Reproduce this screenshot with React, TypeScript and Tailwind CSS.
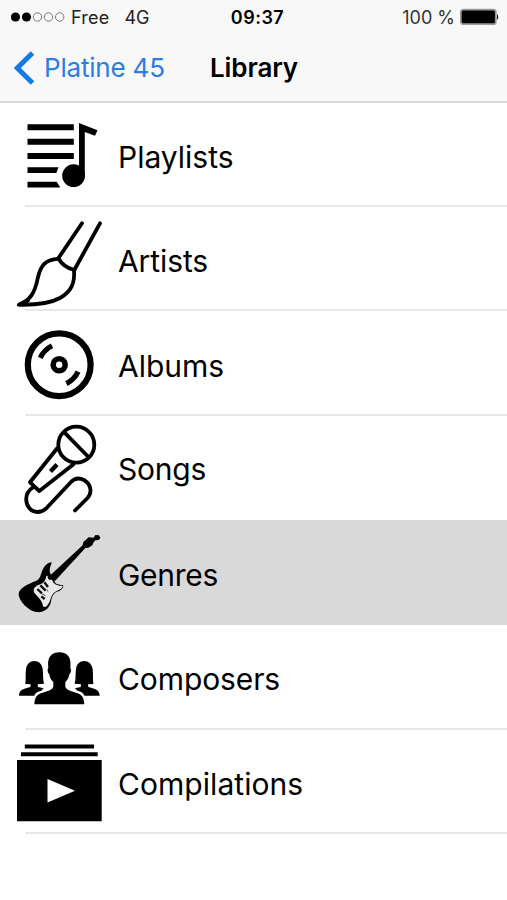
import React from "react";

const PlaylistIcon = () => (
  <g>
    <path d="M27.5 21.3h46.3v6H27.5zM27.5 35.7h46.3v6H27.5zM27.5 50h46.3v6H27.5zM27.5 64.3h31l-2.2 5.8H27.5zM27.5 78.7h29.2l3.6 5.8H27.5z" />
    <circle cx="73.6" cy="72.7" r="11.4" />
    <path d="M79 20l18.5 7.2-2.5 5.6-10.2-3.8V73H79z" />
  </g>
);

const BrushIcon = () => (
  <g fill="none" stroke="#000" strokeWidth="3.8" strokeLinecap="round" strokeLinejoin="round">
    <path d="M82 16.3L58.3 51.3M100 16.3L74.3 63" />
    <path d="M58.3 51.3Q63.5 60.5 74.3 63" />
    <path d="M58 51.8C45 52.5 40.5 59 37.8 71C35 85 31 93 18.8 97.7C31 98 48 97.5 60 91C71.500 84.500 75 76 74 63" />
    <path d="M20 97.5L28 93.500" />
  </g>
);

const DiscIcon = () => (
  <g fill="none" stroke="#000">
    <circle cx="59.2" cy="53.7" r="31.4" strokeWidth="6.2" />
    <circle cx="59.2" cy="53.7" r="6" strokeWidth="5.6" />
    <path d="M40.3 46.8Q44 39 52 34.8M78.1 60.6Q74.4 68.4 66.4 72.6" strokeWidth="5.2" />
  </g>
);

const MicIcon = () => (
  <g fill="none" stroke="#000" strokeWidth="3.8" strokeLinecap="round" strokeLinejoin="round">
    <circle cx="76.3" cy="28.7" r="18" />
    <path d="M64.3 16.3L88.5 41M57 32.5L30 66.3L39.3 75L73.5 48.2" />
    <path d="M57 48.6L50.5 55.4" strokeWidth="4.4" strokeLinecap="butt" />
    <path d="M33.5 71C28 74.5 26.2 78.5 26.2 83C26.2 90.5 31 96 37.5 96C41 96 44 94.5 46.8 91.8L70.5 66.5C74 62.5 79 61.500 84 64C91 68 92.5 76.500 87.5 82L75 94.5" />
  </g>
);

const GuitarIcon = () => (
  <g transform="translate(10 8) scale(.33333)">
    <path d="M121 142L218 52L220 42L236 28L251 29L256 21L267 22L271 29L267 36L256 37L250 44L247 52L235 59L226 60L135 159Z" />
    <path d="M125 103C123 113 118 121 119 129C120 140 127 144 134 155C131 166 142 170 159 171C163 177 153 188 145 190C127 195 125 211 122 225C117 242 101 255 79 252C58 249 27 222 26 198C27 181 51 171 69 162C89 158 91 145 96 130C103 112 115 103 125 103Z" />
    <path d="M113 143C112 154 119 157 126 155C130 170 146 174 158 173C158 183 145 185 139 190C123 198 123 213 118 223C112 235 104 241 99 235C98 220 87 210 75 197C67 186 72 176 87 170C101 167 107 157 109 144Z" fill="#e8e8e8" />
    <path d="M82 183l14 13M91 172l16 16M103 163l11 14M94 205l10 8" fill="none" stroke="#111" strokeWidth="7" />
    <path d="M96 198l11 5M110 184l4 7" fill="none" stroke="#555" strokeWidth="3" />
  </g>
);

const PeopleIcon = () => (
  <g transform="scale(.33333)">
    <path d="M76 177C78 160 76 149 78 133C80 116 91 108 103 108C117 108 126 117 128 132C130 148 128 161 132 176L113 178L114 186L131 190L124 197C109 201 105 205 103 212H57C58 196 67 192 91 186L92 178Z" />
    <path d="M280 177C278 160 280 149 278 133C276 116 265 108 253 108C239 108 230 117 228 132C226 148 228 161 224 176L243 178L242 186L225 190L232 197C247 201 251 205 253 212H299C298 196 289 192 265 186L264 178Z" />
    <path d="M103 238C104 214 113 207 128 203C148 198 158 194 160 184V171C152 165 149 156 148 148C143 143 141 135 145 128C141 98 153 82 178 82C203 82 215 98 211 128C215 135 213 143 208 148C207 156 204 165 196 171V184C198 194 208 198 228 203C243 207 252 214 253 238Z" />
  </g>
);

const StackIcon = () => (
  <g>
    <path d="M24.8 14.6h69.2v4H24.8zM21 22.3h76.7v4H21z" />
    <path fillRule="evenodd" d="M17 30h84.7v61.2H17zM47.5 49v23.6L75 60.8z" />
  </g>
);

const rows = [
  { label: "Playlists", icon: <PlaylistIcon />, height: "h-[104px]", line: true, text: "pt-[4px]" },
  { label: "Artists", icon: <BrushIcon />, height: "h-[104px]", line: true, text: "pt-[4px] tracking-[-0.1px]" },
  { label: "Albums", icon: <DiscIcon />, height: "h-[105px]", line: true, text: "pt-[6px]" },
  { label: "Songs", icon: <MicIcon />, height: "h-[104px]", line: false, text: "pt-[2px] tracking-[-0.2px]" },
  { label: "Genres", icon: <GuitarIcon />, height: "h-[105px]", line: false, text: "pt-[6px] tracking-[-0.3px]" },
  { label: "Composers", icon: <PeopleIcon />, height: "h-[105px]", line: true, text: "pt-[5px] tracking-[-0.1px]" },
  { label: "Compilations", icon: <StackIcon />, height: "h-[104px]", line: true, text: "pt-[4px] tracking-[0.05px]" },
];

const StatusBar = () => (
  <div className="grid h-[34px] grid-cols-3 items-center px-[11px] text-[18px]">
    <div className="flex items-center text-[#222]">
      <svg width="54" height="12" viewBox="0 0 54 12">
        <circle cx="4.5" cy="6" r="4.6" />
        <circle cx="15.5" cy="6" r="4.6" />
        <g fill="none" stroke="#777" strokeWidth="1">
          <circle cx="26.5" cy="6" r="4.2" />
          <circle cx="37.5" cy="6" r="4.2" />
          <circle cx="48.7" cy="6" r="4.2" />
        </g>
      </svg>
      <span className="ml-[6px] tracking-[0.2px]">Free</span>
      <span className="ml-[15px]">4G</span>
    </div>
    <div className="pl-[8px] text-center font-semibold tracking-[0.5px]">09:37</div>
    <div className="flex items-center justify-end text-[#333]">
      <span className="whitespace-nowrap">100 %</span>
      <svg className="-mr-[4px] ml-[5px]" width="40" height="18" viewBox="0 0 40 18">
        <rect x=".8" y="1.600" width="35" height="14.6" rx="2.500" fill="#000" stroke="#999" strokeWidth="1.8" />
        <path d="M37 6q2.500 3 0 6z" />
      </svg>
    </div>
  </div>
);

export default function App() {
  return (
    <div className="h-[900px] w-[507px] overflow-hidden bg-white font-['Inter',sans-serif] text-black">
      <header className="h-[103px] border-b-2 border-[#d9d9d9] bg-[#f8f8f8]">
        <StatusBar />
        <nav className="flex h-[67px] items-center pl-[14px] text-[26px]">
          <svg width="21" height="34" viewBox="0 0 21 34" fill="none" stroke="#147ae6" strokeWidth="5">
            <path d="M18.5 2L3.3 17l15.2 15" />
          </svg>
          <span className="ml-[9px] w-[166px] whitespace-nowrap tracking-[-0.2px] text-[#2b7de0]">Platine 45</span>
          <h1 className="font-semibold tracking-[-0.1px]">Library</h1>
        </nav>
      </header>
      <ul>
        {rows.map((r) => (
          <li key={r.label} className={r.label === "Genres" ? "bg-[#d9d9d9]" : "bg-white"}>
            <div className={`relative flex ${r.height}`}>
              {r.line && <span className="absolute right-0 bottom-0 left-[25px] border-b-2 border-[#e8e8e8]" />}
              <svg className="relative h-[104px] w-[118px] shrink-0" viewBox="0 0 118 104">
                {r.icon}
              </svg>
              <span className={`flex h-[104px] items-center text-[30px] ${r.text}`}>{r.label}</span>
            </div>
          </li>
        ))}
      </ul>
    </div>
  );
}
